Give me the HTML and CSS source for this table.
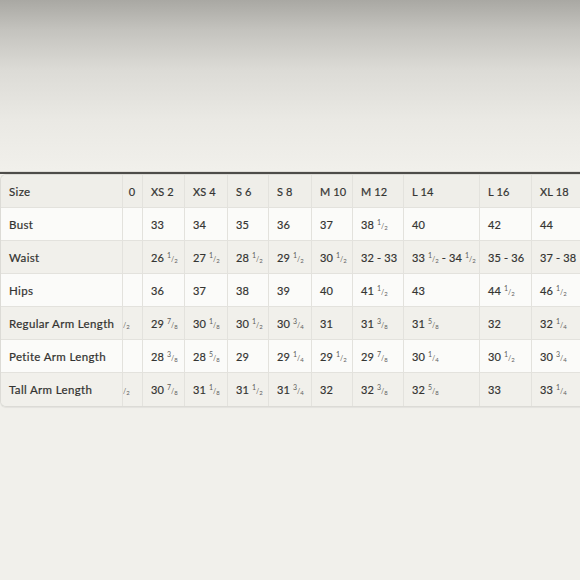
FILE: index.html
```html
<!DOCTYPE html>
<html lang="en">
<head>
<meta charset="utf-8">
<title>Size chart</title>
<link rel="stylesheet" href="styles.css">
</head>
<body>
<div class="page">
  <div class="rule"></div>
  <div class="chart">
    <table class="sizes">
      <colgroup>
        <col class="c-label"><col class="c-xxs"><col class="c-xs2"><col class="c-xs4"><col class="c-s6"><col class="c-s8"><col class="c-m10"><col class="c-m12"><col class="c-l14"><col class="c-l16"><col class="c-xl18">
      </colgroup>
      <tr class="head">
        <td>Size</td><td class="cut"><div class="shift wide">XXS 0</div></td><td>XS 2</td><td>XS 4</td><td>S 6</td><td>S 8</td><td>M 10</td><td>M 12</td><td>L 14</td><td>L 16</td><td>XL 18</td>
      </tr>
      <tr class="light">
        <td>Bust</td><td class="cut"><div class="shift">32</div></td><td>33</td><td>34</td><td>35</td><td>36</td><td>37</td><td>38 <span class="fr"><sup>1</sup>/<sub>2</sub></span></td><td>40</td><td>42</td><td>44</td>
      </tr>
      <tr class="dark">
        <td>Waist</td><td class="cut"><div class="shift">25</div></td><td>26 <span class="fr"><sup>1</sup>/<sub>2</sub></span></td><td>27 <span class="fr"><sup>1</sup>/<sub>2</sub></span></td><td>28 <span class="fr"><sup>1</sup>/<sub>2</sub></span></td><td>29 <span class="fr"><sup>1</sup>/<sub>2</sub></span></td><td>30 <span class="fr"><sup>1</sup>/<sub>2</sub></span></td><td>32 - 33</td><td>33 <span class="fr"><sup>1</sup>/<sub>2</sub></span> - 34 <span class="fr"><sup>1</sup>/<sub>2</sub></span></td><td>35 - 36</td><td>37 - 38</td>
      </tr>
      <tr class="light">
        <td>Hips</td><td class="cut"><div class="shift">35</div></td><td>36</td><td>37</td><td>38</td><td>39</td><td>40</td><td>41 <span class="fr"><sup>1</sup>/<sub>2</sub></span></td><td>43</td><td>44 <span class="fr"><sup>1</sup>/<sub>2</sub></span></td><td>46 <span class="fr"><sup>1</sup>/<sub>2</sub></span></td>
      </tr>
      <tr class="dark">
        <td>Regular Arm Length</td><td class="cut"><div class="shift">29 <span class="fr"><sup>1</sup>/<sub>2</sub></span></div></td><td>29 <span class="fr"><sup>7</sup>/<sub>8</sub></span></td><td>30 <span class="fr"><sup>1</sup>/<sub>8</sub></span></td><td>30 <span class="fr"><sup>1</sup>/<sub>2</sub></span></td><td>30 <span class="fr"><sup>3</sup>/<sub>4</sub></span></td><td>31</td><td>31 <span class="fr"><sup>3</sup>/<sub>8</sub></span></td><td>31 <span class="fr"><sup>5</sup>/<sub>8</sub></span></td><td>32</td><td>32 <span class="fr"><sup>1</sup>/<sub>4</sub></span></td>
      </tr>
      <tr class="light">
        <td>Petite Arm Length</td><td class="cut"><div class="shift">28</div></td><td>28 <span class="fr"><sup>3</sup>/<sub>8</sub></span></td><td>28 <span class="fr"><sup>5</sup>/<sub>8</sub></span></td><td>29</td><td>29 <span class="fr"><sup>1</sup>/<sub>4</sub></span></td><td>29 <span class="fr"><sup>1</sup>/<sub>2</sub></span></td><td>29 <span class="fr"><sup>7</sup>/<sub>8</sub></span></td><td>30 <span class="fr"><sup>1</sup>/<sub>4</sub></span></td><td>30 <span class="fr"><sup>1</sup>/<sub>2</sub></span></td><td>30 <span class="fr"><sup>3</sup>/<sub>4</sub></span></td>
      </tr>
      <tr class="dark last">
        <td>Tall Arm Length</td><td class="cut"><div class="shift">30 <span class="fr"><sup>1</sup>/<sub>2</sub></span></div></td><td>30 <span class="fr"><sup>7</sup>/<sub>8</sub></span></td><td>31 <span class="fr"><sup>1</sup>/<sub>8</sub></span></td><td>31 <span class="fr"><sup>1</sup>/<sub>2</sub></span></td><td>31 <span class="fr"><sup>3</sup>/<sub>4</sub></span></td><td>32</td><td>32 <span class="fr"><sup>3</sup>/<sub>8</sub></span></td><td>32 <span class="fr"><sup>5</sup>/<sub>8</sub></span></td><td>33</td><td>33 <span class="fr"><sup>1</sup>/<sub>4</sub></span></td>
      </tr>
    </table>
  </div>
</div>
</body>
</html>
```

FILE: styles.css
```css
html, body {
  margin: 0;
  padding: 0;
  height: 100%;
  overflow: hidden;
}

body {
  width: 580px;
  height: 580px;
  background:
    linear-gradient(to bottom, #a9a8a3 0px, #c4c3be 30px, #dcdbd6 70px, #eae9e4 120px, #f1f0eb 170px, #f1f0eb 100%);
  font-family: "Lato", "Open Sans", sans-serif;
  color: #353533;
}

.page {
  padding-top: 171px;
  width: 600px;
}

.rule {
  height: 2px;
  background: #4d4c49;
  border-top: 1px solid #dedcd7;
}

.chart {
  width: 600px;
  border: 1px solid #dcdbd6;
  border-right: none;
  border-radius: 6px 0 0 6px;
  overflow: hidden;
  box-shadow: 0 1px 1px rgba(0, 0, 0, 0.06);
}

.sizes {
  border-collapse: separate;
  border-spacing: 0;
  table-layout: fixed;
  width: 591px;
  font-size: 11px;
  letter-spacing: 0.15px;
  -webkit-text-stroke: 0.2px currentColor;
}

.c-label { width: 122px; }
.c-xxs { width: 20px; }
.c-xs2 { width: 42px; }
.c-xs4 { width: 43px; }
.c-s6 { width: 41px; }
.c-s8 { width: 43px; }
.c-m10 { width: 41px; }
.c-m12 { width: 51px; }
.c-l14 { width: 76px; }
.c-l16 { width: 52px; }
.c-xl18 { width: 60px; }

.sizes td {
  height: 33px;
  padding: 0 0 0 8px;
  box-sizing: border-box;
  border-right: 1px solid #e3e2dd;
  border-bottom: 1px solid #e3e2dd;
  white-space: nowrap;
  overflow: hidden;
  vertical-align: middle;
  text-align: left;
}

.sizes td:first-child {
  color: #333331;
  font-size: 11.5px;
  letter-spacing: 0.35px;
}

.sizes tr.last td {
  border-bottom: none;
}

.head td { background: #efeee9; }
.light td { background: #fbfbf9; }
.dark td { background: #f1f0eb; }

.sizes td.cut {
  padding-left: 0;
}

.shift {
  margin-left: -20px;
}

.shift.wide {
  margin-left: -22px;
  word-spacing: 4px;
}

.fr {
  font-size: 7px;
  letter-spacing: 0;
  color: #5e5e5b;
  -webkit-text-stroke: 0;
}

.fr sup {
  vertical-align: 4px;
  font-size: 7px;
}

.fr sub {
  vertical-align: -1px;
  font-size: 6px;
}
```
